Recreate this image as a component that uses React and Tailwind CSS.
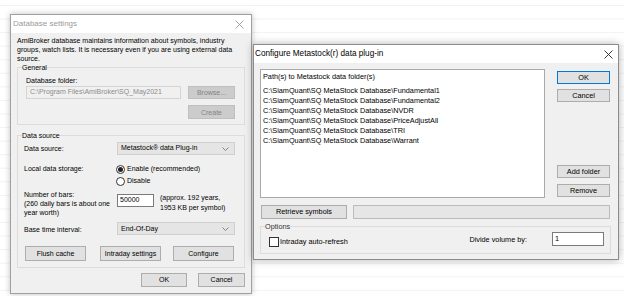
import React from 'react';

const Btn = ({ children, className = '', disabled = false, focus = false }) => (
  <div
    className={`flex items-center justify-center border leading-none ${
      disabled
        ? 'bg-[#cccccc] border-[#bfbfbf] text-[#838383]'
        : focus
        ? 'bg-[#e1e1e1] border-[#0078d7]'
        : 'bg-[#e1e1e1] border-[#adadad]'
    } ${className}`}
  >
    {children}
  </div>
);

const Chevron = () => (
  <svg width="7" height="4" viewBox="0 0 7 4" className="ml-auto">
    <polyline points="0.5,0.5 3.5,3.5 6.5,0.5" fill="none" stroke="#707070" strokeWidth="0.8" />
  </svg>
);

const Select = ({ value }) => (
  <div className="flex items-center w-[118px] h-[13px] bg-[#e5e5e5] border border-[#cfcfcf] pl-[3px] pr-[5px]">
    <span>{value}</span>
    <Chevron />
  </div>
);

const Radio = ({ checked, label }) => (
  <div className="flex items-center h-[12px]">
    <div className="w-[9px] h-[9px] rounded-full border border-[#333] bg-white flex items-center justify-center">
      {checked && <div className="w-[5px] h-[5px] rounded-full bg-[#222]" />}
    </div>
    <span className="ml-[2px]">{label}</span>
  </div>
);

const CloseX = ({ color }) => (
  <svg width="9" height="9" viewBox="0 0 9 9">
    <path d="M0.5 0.5L8.5 8.5M8.5 0.5L0.5 8.5" stroke={color} strokeWidth="0.9" />
  </svg>
);

const paths = [
  'C:\\SiamQuant\\SQ MetaStock Database\\Fundamental1',
  'C:\\SiamQuant\\SQ MetaStock Database\\Fundamental2',
  'C:\\SiamQuant\\SQ MetaStock Database\\NVDR',
  'C:\\SiamQuant\\SQ MetaStock Database\\PriceAdjustAll',
  'C:\\SiamQuant\\SQ MetaStock Database\\TRI',
  'C:\\SiamQuant\\SQ MetaStock Database\\Warrant',
];

const DatabaseSettings = () => (
  <div className="absolute left-[10px] top-[14px] w-[242px] h-[280px] flex flex-col border border-[#a0a0a0] shadow-[0_0_6px_rgba(0,0,0,0.25)] font-['Liberation_Sans',Arial,sans-serif] text-[7px] text-black">
    <div className="h-[18px] bg-white flex items-center pl-[2px] pr-[7px] text-[8px] text-[#9a9a9a]">
      <span>Database settings</span>
      <div className="ml-auto">
        <CloseX color="#9a9a9a" />
      </div>
    </div>
    <div className="flex-1 bg-[#f0f0f0] px-[6px] pt-[3px] flex flex-col">
      <p className="leading-[9px] whitespace-nowrap">
        AmiBroker database maintains information about symbols, industry
        <br />
        groups, watch lists. It is necessary even if you are using external data
        <br />
        source.
      </p>

      <fieldset className="border border-[#dcdcdc] w-[228px] pb-[5px]">
        <legend className="ml-[4px] leading-[9px]">General</legend>
        <div className="pl-[8px] pr-[9px]">
          <div className="mt-[4px] leading-[9px]">Database folder:</div>
          <div className="flex gap-[7px] mt-[1px]">
            <div className="w-[155px] h-[13px] border border-[#d4d4d4] bg-[#f0f0f0] text-[#8c8c8c] flex items-center pl-[3px]">
              C:\Program Files\AmiBroker\SQ_May2021
            </div>
            <Btn disabled className="w-[47px] h-[13px]">Browse...</Btn>
          </div>
          <div className="flex justify-end mt-[6px]">
            <Btn disabled className="w-[47px] h-[14px]">Create</Btn>
          </div>
        </div>
      </fieldset>

      <fieldset className="border border-[#dcdcdc] w-[228px] mt-[6px] pb-[6px]">
        <legend className="ml-[4px] leading-[9px]">Data source</legend>
        <div className="pl-[6px] pr-[9px]">
          <div className="flex items-center mt-[2px]">
            <div className="w-[93px] pt-[2px]">Data source:</div>
            <Select value="Metastock® data Plug-in" />
          </div>
          <div className="flex mt-[8px]">
            <div className="w-[93px] leading-[12px]">Local data storage:</div>
            <div className="-ml-[1px]">
              <Radio checked label="Enable (recommended)" />
              <Radio label="Disable" />
            </div>
          </div>
          <div className="flex mt-[3px]">
            <div className="w-[93px] leading-[9px]">
              Number of bars:
              <br />
              (260 daily bars is about one
              <br />
              year worth)
            </div>
            <div className="w-[37px] h-[13px] mt-[4px] bg-white border border-[#7a7a7a] flex items-center pl-[2px]">
              50000
            </div>
            <div className="ml-[6px] leading-[10px] mt-[3px]">
              (approx. 192 years,
              <br />
              1953 KB per symbol)
            </div>
          </div>
          <div className="flex items-center mt-[5px]">
            <div className="w-[93px] pt-[3px]">Base time interval:</div>
            <Select value="End-Of-Day" />
          </div>
          <div className="flex mt-[10px] pl-[1px] gap-[14px]">
            <Btn className="w-[61px] h-[15px]">Flush cache</Btn>
            <Btn className="w-[61px] h-[15px]">Intraday settings</Btn>
            <Btn className="w-[61px] h-[15px] -ml-[2px]">Configure</Btn>
          </div>
        </div>
      </fieldset>

      <div className="flex justify-end gap-[11px] mt-[5px]">
        <Btn className="w-[46px] h-[14px]">OK</Btn>
        <Btn className="w-[47px] h-[14px]">Cancel</Btn>
      </div>
    </div>
  </div>
);

const ConfigureDialog = () => (
  <div className="absolute left-[253px] top-[44px] w-[366px] h-[216px] flex flex-col border border-[#8c8c8c] shadow-[0_0_8px_rgba(0,0,0,0.3)] font-['Liberation_Sans',Arial,sans-serif] text-[7.3px] text-black">
    <div className="h-[18px] bg-white flex items-center pl-[1px] pr-[5px] text-[8.2px]">
      <span>Configure Metastock(r) data plug-in</span>
      <div className="ml-auto">
        <CloseX color="#222" />
      </div>
    </div>
    <div className="flex-1 bg-[#f0f0f0] pl-[6px] pr-[7px] pt-[6px] flex flex-col">
      <div className="flex gap-[12px]">
        <div className="w-[285px] h-[129px] bg-white border border-[#a9a9a9] pl-[2px] pt-[2px] leading-[10px]">
          <div className="mb-[4px]">Path(s) to Metastock data folder(s)</div>
          {paths.map((p) => (
            <div key={p}>{p}</div>
          ))}
        </div>
        <div className="w-[53px] flex flex-col justify-between pt-[2px] pb-[1px]">
          <div className="flex flex-col gap-[5px]">
            <Btn focus className="h-[13px]">OK</Btn>
            <Btn className="h-[13px]">Cancel</Btn>
          </div>
          <div className="flex flex-col gap-[6px]">
            <Btn className="h-[13px]">Add folder</Btn>
            <Btn className="h-[13px]">Remove</Btn>
          </div>
        </div>
      </div>

      <div className="flex gap-[6px] mt-[7px] pl-[1px]">
        <Btn className="w-[86px] h-[14px]">Retrieve symbols</Btn>
        <div className="w-[257px] h-[14px] bg-[#e6e6e6] border border-[#bcbcbc]" />
      </div>

      <fieldset className="border border-[#dcdcdc] w-[351px] mt-[3px] pb-[5px]">
        <legend className="ml-[4px] leading-[9px] text-[#333]">Options</legend>
        <div className="flex items-center pl-[8px] pr-[6px]">
          <div className="flex items-center mt-[6px]">
            <div className="w-[10px] h-[10px] bg-white border border-[#333]" />
            <span className="ml-[1px]">Intraday auto-refresh</span>
          </div>
          <span className="ml-auto mr-[25px] mt-[1px]">Divide volume by:</span>
          <div className="w-[52px] h-[14px] bg-white border border-[#7a7a7a] flex items-center pl-[2px]">
            1
          </div>
        </div>
      </fieldset>
    </div>
  </div>
);

const App = () => (
  <div className="relative w-[624px] h-[296px] overflow-hidden bg-white bg-[linear-gradient(#f2f2f2_1px,transparent_1px)] bg-[length:100%_13.57px] bg-[position:0_5px]">
    <DatabaseSettings />
    <ConfigureDialog />
  </div>
);

export default App;
